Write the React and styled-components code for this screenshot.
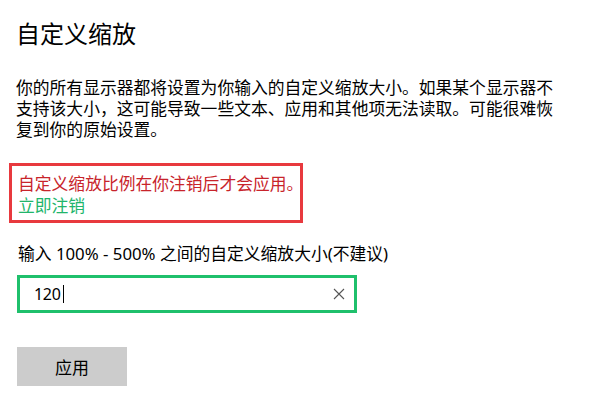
import React from 'react';
import styled, { createGlobalStyle } from 'styled-components';

const GlobalStyle = createGlobalStyle`
  html, body {
    margin: 0;
    padding: 0;
    background: #ffffff;
  }
  body {
    font-family: "Noto Sans", "Noto Sans CJK SC", sans-serif;
    color: #000000;
  }
`;

const Page = styled.div`
  width: 600px;
  height: 404px;
  box-sizing: border-box;
  padding: 18px 0 0 17px;
  background: #ffffff;
  overflow: hidden;
`;

const Title = styled.h1`
  margin: 0 0 0 -1px;
  font-size: 24px;
  font-weight: 400;
  line-height: 32px;
`;

const Description = styled.p`
  margin: 27px 0 0 -1px;
  width: 548px;
  font-size: 16.8px;
  line-height: 21px;
`;

const Notice = styled.div`
  margin: 23px 0 0 -8px;
  width: 294px;
  box-sizing: border-box;
  border: 3px solid #e8393e;
  padding: 7px 0 3px 6px;
  white-space: nowrap;
`;

const NoticeLine = styled.div`
  font-size: 16.8px;
  line-height: 22px;
  color: ${(p) => p.$color};
`;

const Label = styled.div`
  margin: 20px 0 0 1px;
  font-size: 16.8px;
  line-height: 22px;
`;

const Field = styled.div`
  margin-top: 10px;
  width: 340px;
  height: 38px;
  box-sizing: border-box;
  border: 3px solid #1fc06c;
  display: flex;
  align-items: center;
  padding: 0 9px 0 14px;
`;

const Value = styled.span`
  font-size: 16px;
  line-height: 20px;
  letter-spacing: -0.3px;
`;

const Caret = styled.span`
  width: 1px;
  height: 18px;
  margin-left: 2px;
  background: #000000;
`;

const Clear = styled.span`
  margin-left: auto;
  display: flex;
  align-items: center;
  color: #555555;
`;

const ApplyButton = styled.button`
  margin-top: 34px;
  width: 110px;
  height: 39px;
  border: none;
  background: #cccccc;
  font-family: inherit;
  font-size: 17px;
  color: #000000;
  padding: 0;
`;

function ClearIcon() {
  return (
    <svg width="12" height="12" viewBox="0 0 12 12" fill="none">
      <path d="M1 1 L11 11 M11 1 L1 11" stroke="currentColor" strokeWidth="1.1" />
    </svg>
  );
}

export default function App() {
  return (
    <>
      <GlobalStyle />
      <Page>
        <Title>自定义缩放</Title>
        <Description>
          你的所有显示器都将设置为你输入的自定义缩放大小。如果某个显示器不支持该大小，这可能导致一些文本、应用和其他项无法读取。可能很难恢复到你的原始设置。
        </Description>
        <Notice>
          <NoticeLine $color="#c8242b">自定义缩放比例在你注销后才会应用。</NoticeLine>
          <NoticeLine $color="#21b56b">立即注销</NoticeLine>
        </Notice>
        <Label>输入 100% - 500% 之间的自定义缩放大小(不建议)</Label>
        <Field>
          <Value>120</Value>
          <Caret />
          <Clear>
            <ClearIcon />
          </Clear>
        </Field>
        <ApplyButton>应用</ApplyButton>
      </Page>
    </>
  );
}
